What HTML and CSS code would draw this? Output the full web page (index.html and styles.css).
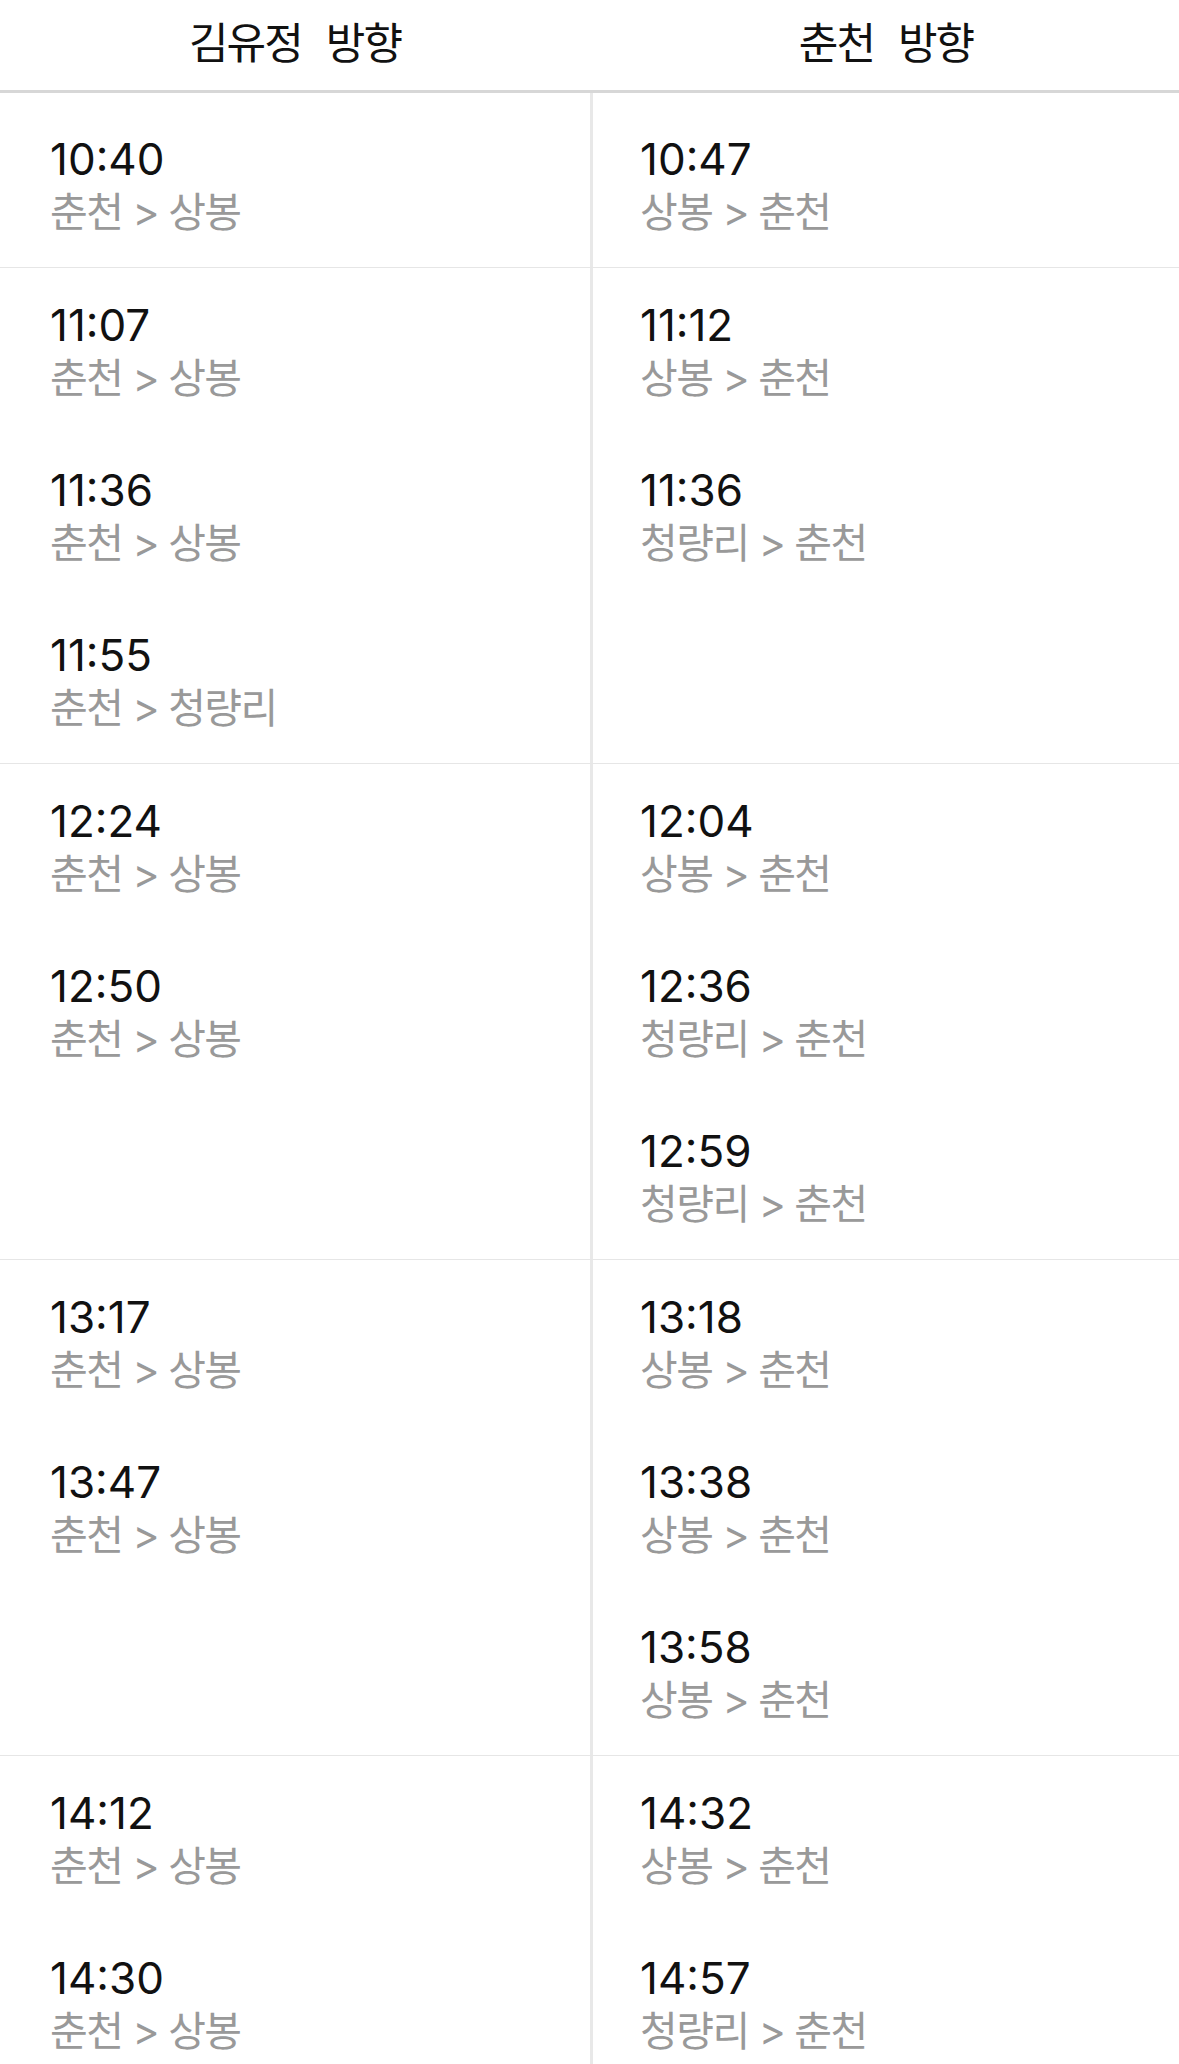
FILE: index.html
```html
<!DOCTYPE html>
<html lang="ko">
<head>
  <meta charset="UTF-8">
  <title>경춘선 시간표</title>
  <link rel="stylesheet" href="styles.css">
</head>
<body>
  <div class="header">
    <div class="header-title">김유정 방향</div>
    <div class="header-title">춘천 방향</div>
  </div>

  <div class="timetable">
    <!-- 10시 -->
    <div class="hour first">
      <div class="cell left">
        <div class="train"><div class="time">10:40</div><div class="route">춘천 &gt; 상봉</div></div>
      </div>
      <div class="cell right">
        <div class="train"><div class="time">10:47</div><div class="route">상봉 &gt; 춘천</div></div>
      </div>
    </div>

    <!-- 11시 -->
    <div class="hour">
      <div class="cell left">
        <div class="train"><div class="time">11:07</div><div class="route">춘천 &gt; 상봉</div></div>
        <div class="train"><div class="time">11:36</div><div class="route">춘천 &gt; 상봉</div></div>
        <div class="train"><div class="time">11:55</div><div class="route">춘천 &gt; 청량리</div></div>
      </div>
      <div class="cell right">
        <div class="train"><div class="time">11:12</div><div class="route">상봉 &gt; 춘천</div></div>
        <div class="train"><div class="time">11:36</div><div class="route">청량리 &gt; 춘천</div></div>
      </div>
    </div>

    <!-- 12시 -->
    <div class="hour">
      <div class="cell left">
        <div class="train"><div class="time">12:24</div><div class="route">춘천 &gt; 상봉</div></div>
        <div class="train"><div class="time">12:50</div><div class="route">춘천 &gt; 상봉</div></div>
      </div>
      <div class="cell right">
        <div class="train"><div class="time">12:04</div><div class="route">상봉 &gt; 춘천</div></div>
        <div class="train"><div class="time">12:36</div><div class="route">청량리 &gt; 춘천</div></div>
        <div class="train"><div class="time">12:59</div><div class="route">청량리 &gt; 춘천</div></div>
      </div>
    </div>

    <!-- 13시 -->
    <div class="hour">
      <div class="cell left">
        <div class="train"><div class="time">13:17</div><div class="route">춘천 &gt; 상봉</div></div>
        <div class="train"><div class="time">13:47</div><div class="route">춘천 &gt; 상봉</div></div>
      </div>
      <div class="cell right">
        <div class="train"><div class="time">13:18</div><div class="route">상봉 &gt; 춘천</div></div>
        <div class="train"><div class="time">13:38</div><div class="route">상봉 &gt; 춘천</div></div>
        <div class="train"><div class="time">13:58</div><div class="route">상봉 &gt; 춘천</div></div>
      </div>
    </div>

    <!-- 14시 -->
    <div class="hour">
      <div class="cell left">
        <div class="train"><div class="time">14:12</div><div class="route">춘천 &gt; 상봉</div></div>
        <div class="train"><div class="time">14:30</div><div class="route">춘천 &gt; 상봉</div></div>
      </div>
      <div class="cell right">
        <div class="train"><div class="time">14:32</div><div class="route">상봉 &gt; 춘천</div></div>
        <div class="train"><div class="time">14:57</div><div class="route">청량리 &gt; 춘천</div></div>
      </div>
    </div>
  </div>
</body>
</html>
```

FILE: styles.css
```css
body {
  margin: 0;
  background: #fff;
  font-family: Inter, "Noto Sans CJK KR", sans-serif;
  color: #111;
  overflow: hidden;
}

/* Column titles */
.header {
  display: grid;
  grid-template-columns: 590px 1fr;
  height: 90px;
  border-bottom: 3px solid #d7d7d7;
}

.header-title {
  text-align: center;
  font-size: 43px;
  line-height: 86px;
  letter-spacing: -2px;
  word-spacing: 14px;
}

.header-title + .header-title {
  padding-left: 3px;
}

/* One block per hour */
.hour {
  display: grid;
  grid-template-columns: 590px 1fr;
  border-bottom: 1px solid #e6e6e6;
}

.hour.first {
  padding-top: 9px;
}

.hour.first .right {
  margin-top: -9px;
  padding-top: 9px;
}

.cell.left {
  padding-left: 50px;
}

.cell.right {
  padding-left: 47px;
  border-left: 3px solid #e8e8e8;
}

.train {
  box-sizing: border-box;
  height: 165px;
  padding-top: 32px;
}

.time {
  font-size: 44px;
  line-height: 50px;
}

.route {
  margin-top: 6px;
  font-size: 41px;
  line-height: 44px;
  letter-spacing: -1.5px;
  color: #999;
}
```
